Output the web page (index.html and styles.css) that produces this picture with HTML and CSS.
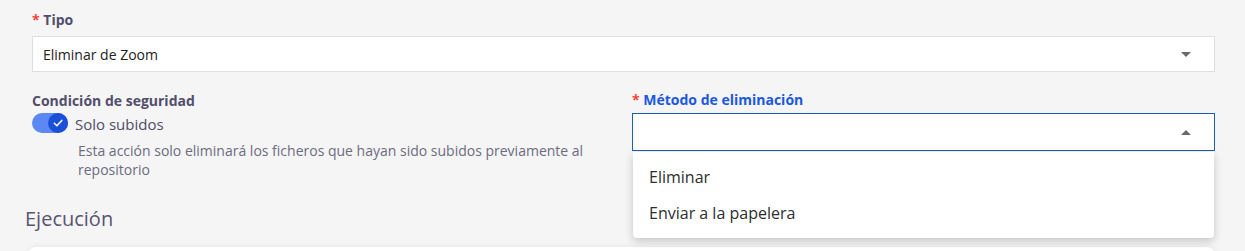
FILE: index.html
```html
<!DOCTYPE html>
<html lang="es">
<head>
<meta charset="utf-8">
<link rel="stylesheet" href="styles.css">
</head>
<body>
<div class="page">
  <div class="field">
    <label class="label"><span class="req">*</span> Tipo</label>
    <div class="select">
      <span class="value">Eliminar de Zoom</span>
      <span class="caret down"></span>
    </div>
  </div>

  <div class="row">
    <div class="col left">
      <div class="label plain">Condición de seguridad</div>
      <div class="switch-row">
        <span class="switch"><span class="thumb">
          <svg width="12" height="12" viewBox="0 0 12 12"><path d="M2.3 6.3 L4.9 8.8 L9.8 3.4" fill="none" stroke="#fff" stroke-width="1.5" stroke-linecap="round" stroke-linejoin="round"/></svg>
        </span></span>
        <span class="switch-text">Solo subidos</span>
      </div>
      <p class="help">Esta acción solo eliminará los ficheros que hayan sido subidos previamente al repositorio</p>
    </div>
    <div class="col right">
      <label class="label active"><span class="req">*</span> Método de eliminación</label>
      <div class="select focus">
        <span class="value"></span>
        <span class="caret up"></span>
      </div>
      <ul class="menu">
        <li>Eliminar</li>
        <li>Enviar a la papelera</li>
      </ul>
    </div>
  </div>

  <h2 class="section">Ejecución</h2>
  <div class="card"></div>
</div>
</body>
</html>
```

FILE: styles.css
```css
html, body {
  margin: 0;
  padding: 0;
  background: #f5f5f5;
  font-family: "Open Sans", "Noto Sans", sans-serif;
  overflow: hidden;
}
.page {
  padding: 11px 30px 0 32px;
  height: 251px;
  box-sizing: border-box;
  overflow: hidden;
}
.label {
  display: block;
  font-size: 14px;
  line-height: 18px;
  font-weight: 700;
  color: #514e6d;
}
.label .req {
  color: #f5443f;
}
.label.active {
  color: #1b58e0;
}
.select {
  margin-top: 7px;
  height: 36px;
  box-sizing: border-box;
  border: 1px solid #dedede;
  background: #fff;
  display: flex;
  align-items: center;
  justify-content: space-between;
  padding: 0 23px 0 10px;
}
.select .value {
  font-size: 14px;
  color: #222;
}
.caret {
  width: 0;
  height: 0;
  border-left: 5px solid transparent;
  border-right: 5px solid transparent;
}
.caret.down { border-top: 5px solid #6a6a6a; }
.caret.up { border-bottom: 5px solid #6a6a6a; }

.row {
  display: grid;
  grid-template-columns: 568px 1fr;
  column-gap: 32px;
  margin-top: 19px;
}
.col { position: relative; }
.left .label { margin-top: 1px; }
.select.focus {
  margin-top: 4px;
  height: 38px;
  border-color: #1e5fb4;
}
.switch-row {
  display: flex;
  align-items: center;
  margin-top: 3px;
  height: 20px;
}
.switch {
  width: 36px;
  height: 20px;
  border-radius: 10px;
  background: #5b88f2;
  display: flex;
  justify-content: flex-end;
}
.thumb {
  width: 20px;
  height: 20px;
  border-radius: 50%;
  background: #1b4fd8;
  display: flex;
  align-items: center;
  justify-content: center;
}
.switch-text {
  margin-left: 7px;
  font-size: 15px;
  color: #4f4d66;
  position: relative;
  top: 1px;
}
.help {
  margin: 8px 0 0 46px;
  font-size: 14px;
  line-height: 19px;
  color: #6c6b80;
}
.menu {
  position: absolute;
  top: 61px;
  left: 1px;
  right: 1px;
  margin: 0;
  padding: 7px 0;
  list-style: none;
  background: #fff;
  border-radius: 0 0 4px 4px;
  box-shadow: 0 3px 8px rgba(0,0,0,0.2);
  z-index: 2;
}
.menu li {
  height: 36px;
  line-height: 36px;
  padding-left: 16px;
  font-size: 16px;
  color: #2e2e2e;
}
.section {
  margin: 26px 0 0 -7px;
  font-size: 20px;
  line-height: 28px;
  font-weight: 500;
  color: #57546f;
}
.card {
  margin: 14px 0 0 -4px;
  height: 40px;
  background: #fff;
  border-radius: 8px;
  box-shadow: 0 0 6px rgba(0,0,0,0.08);
}
```
